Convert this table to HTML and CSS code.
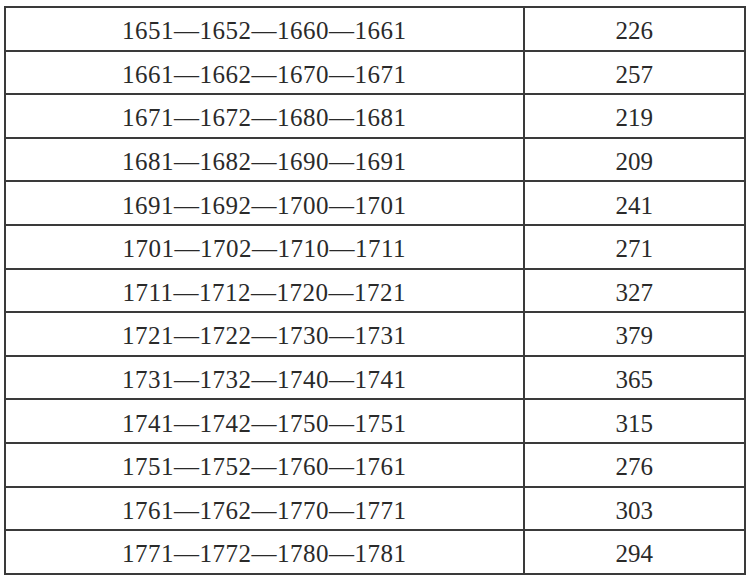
FILE: index.html
```html
<!DOCTYPE html>
<html>
<head>
<meta charset="utf-8">
<link rel="stylesheet" href="styles.css">
</head>
<body>
<div class="page">
<table class="data">
<colgroup><col class="c1"><col class="c2"></colgroup>
<tbody>
<tr><td>1651—1652—1660—1661</td><td>226</td></tr>
<tr><td>1661—1662—1670—1671</td><td>257</td></tr>
<tr><td>1671—1672—1680—1681</td><td>219</td></tr>
<tr><td>1681—1682—1690—1691</td><td>209</td></tr>
<tr><td>1691—1692—1700—1701</td><td>241</td></tr>
<tr><td>1701—1702—1710—1711</td><td>271</td></tr>
<tr><td>1711—1712—1720—1721</td><td>327</td></tr>
<tr><td>1721—1722—1730—1731</td><td>379</td></tr>
<tr><td>1731—1732—1740—1741</td><td>365</td></tr>
<tr><td>1741—1742—1750—1751</td><td>315</td></tr>
<tr><td>1751—1752—1760—1761</td><td>276</td></tr>
<tr><td>1761—1762—1770—1771</td><td>303</td></tr>
<tr><td>1771—1772—1780—1781</td><td>294</td></tr>
</tbody>
</table>
</div>
</body>
</html>
```
FILE: styles.css
```css
html, body {
  margin: 0;
  padding: 0;
  background: #fff;
}
.page {
  padding: 6px 4px 0 4px;
}
.data {
  border-collapse: collapse;
  width: 742px;
  font-family: "Liberation Serif", "DejaVu Serif", serif;
  font-size: 25px;
  color: #2a2a2a;
}
.c1 { width: 520px; }
.c2 { width: 222px; }
.data td {
  border: 2px solid #3a3a3a;
  height: 43.6px;
  padding: 4px 0 0 0;
  text-align: center;
  vertical-align: middle;
  line-height: 1;
  box-sizing: border-box;
}
.data td:first-child {
  letter-spacing: 0.5px;
}
```
